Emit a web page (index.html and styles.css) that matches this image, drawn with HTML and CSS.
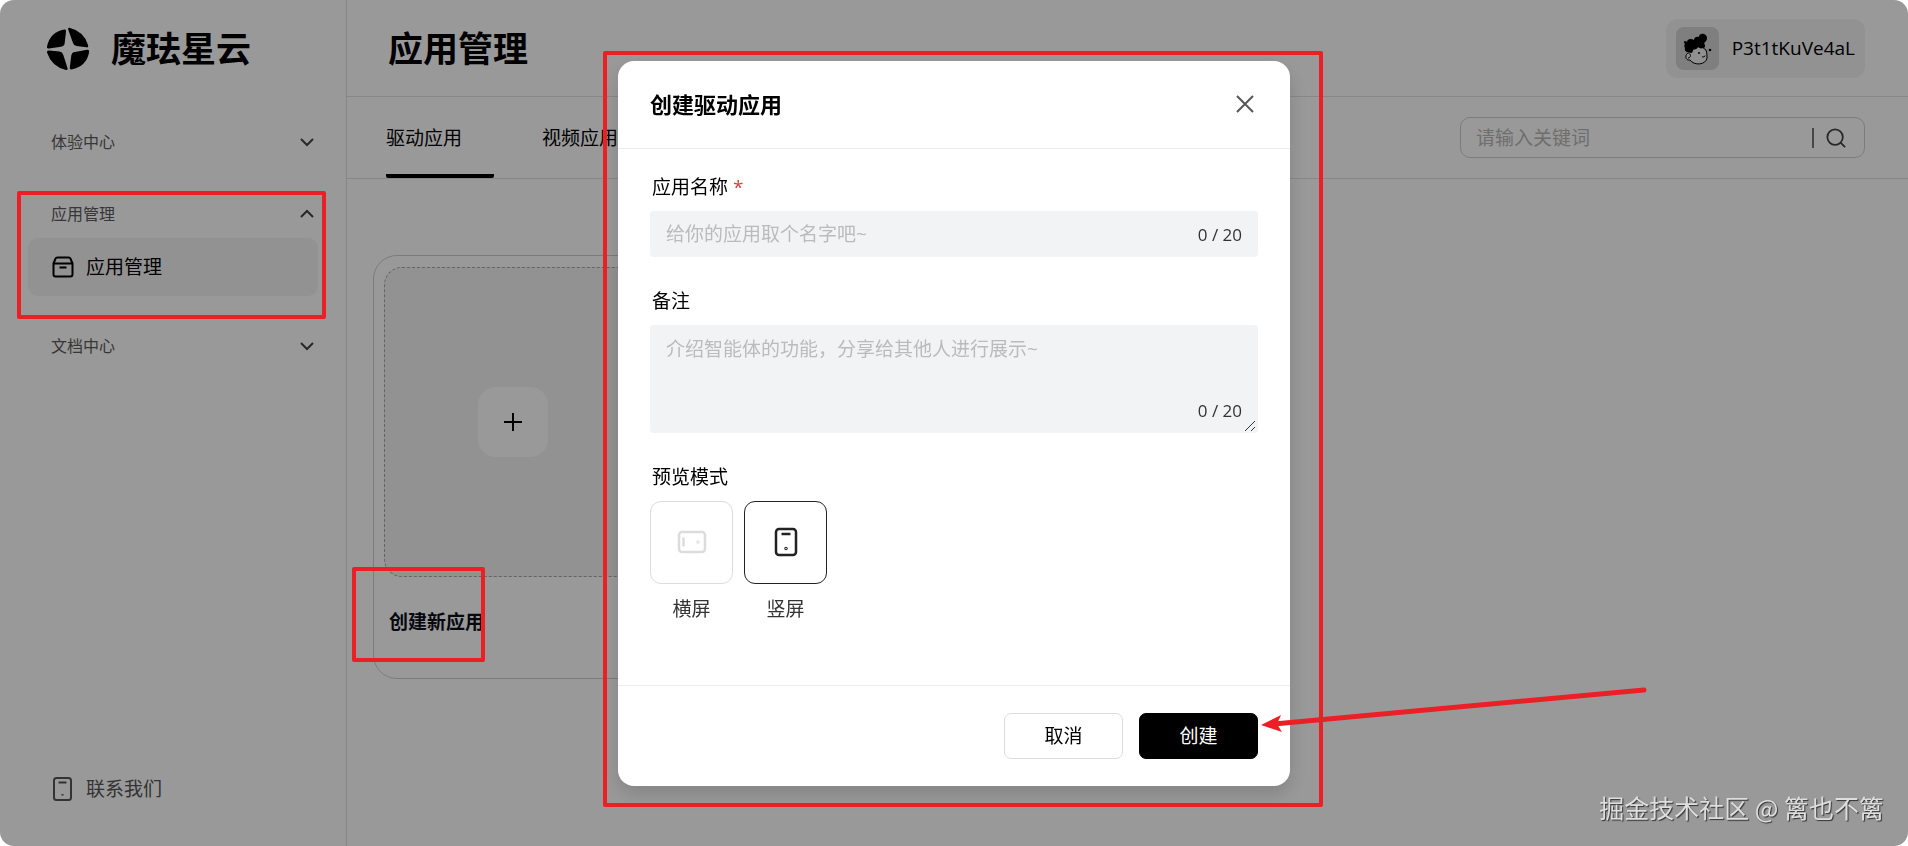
FILE: index.html
```html
<!DOCTYPE html>
<html lang="zh-CN">
  <head>
    <meta charset="UTF-8" />
    <meta name="viewport" content="width=device-width, initial-scale=1.0" />
    <title>应用管理</title>
    <link rel="stylesheet" href="styles.css" />
  </head>
  <body>
    <div class="app">
      <aside class="sidebar">
        <div class="brand">
          <svg class="brand-logo" viewBox="0 0 44 44" aria-hidden="true">
            <path d="M18.500 2.500 Q4 5 1 19.500 Q0.500 22 3 21.500 L15 19.800 Q18.500 19.300 18.700 16 L20 4.500 Q20.200 2.200 18.500 2.500Z" />
            <path d="M23.500 0.800 Q38 4.500 42 18 Q43 20.800 40.500 20.300 L30.500 19 Q27.800 18.600 27 16 L22.200 2.500 Q21.700 0.300 23.500 0.800Z" />
            <path d="M1 25.500 Q0.600 23.300 3 23.500 L13.500 24.600 Q16.500 25 17.300 28 L21.500 41 Q22.300 43.500 20 43 Q5.500 39.500 1 25.500Z" />
            <path d="M25.500 42.500 Q40.500 39.500 43.200 25 Q43.600 22.400 41 22.800 L29 24.900 Q25.700 25.300 25.300 28.500 L23.800 40.500 Q23.500 42.800 25.500 42.500Z" />
          </svg>
          <span class="brand-name">魔珐星云</span>
        </div>

        <nav class="menu">
          <div class="menu-group">
            <button class="menu-head" type="button">
              体验中心
              <svg class="chevron" viewBox="0 0 14 8"><path d="M1 1l6 6 6-6" /></svg>
            </button>
          </div>
          <div class="menu-group">
            <div class="mark mark-menu"></div>
            <button class="menu-head" type="button">
              应用管理
              <svg class="chevron" viewBox="0 0 14 8"><path d="M1 7l6-6 6 6" /></svg>
            </button>
            <a class="menu-item active" href="#">
              <svg class="menu-icon" viewBox="0 0 22 24">
                <path d="M1.500 8.500h19v11a2 2 0 0 1-2 2h-15a2 2 0 0 1-2-2zM1.500 8.500l2-4.800a2 2 0 0 1 1.800-1.200h11.400a2 2 0 0 1 1.800 1.200l2 4.800M7.500 12.500h7" />
              </svg>
              应用管理
            </a>
          </div>
          <div class="menu-group">
            <button class="menu-head" type="button">
              文档中心
              <svg class="chevron" viewBox="0 0 14 8"><path d="M1 1l6 6 6-6" /></svg>
            </button>
          </div>
        </nav>

        <a class="menu-item contact" href="#">
          <svg class="menu-icon" viewBox="0 0 22 24">
            <rect x="2" y="1" width="17" height="22" rx="2.500" />
            <path d="M6.500 5.500h8M10.500 17v1.500" />
          </svg>
          联系我们
        </a>
      </aside>

      <main class="main">
        <header class="topbar">
          <h1 class="page-title">应用管理</h1>
          <button class="user" type="button">
            <svg class="avatar" viewBox="0 0 43 43">
              <rect class="avatar-bg" width="43" height="43" rx="8" />
              <path class="avatar-face" d="M14 26c-5-1-6 8 0 7 4 6 16 5 17-2 0-3 0-5-1-8L22 17l-6 6z" />
              <path d="M12 31c2 0 3-2 2-4M26 29.500c1 1 3 .5 3-1" class="avatar-line" />
              <path d="M9 17c-3-3 1-4 2-2 0-3 4-4 7-2 0-3 3-4 5-3 0-5 8-4 8 1 0 3-2 4-3 5 2 3 1 5-1 5-2 1-4 0-5-1-1 3-4 2-5 3 0 2-1 3-2 3l-1-1c-3 1-6-1-5-4-1-1-1-3 0-4z" />
              <circle cx="23" cy="26" r="1" />
              <circle cx="34" cy="23" r="1.300" />
            </svg>
            <span>P3t1tKuVe4aL</span>
          </button>
        </header>

        <div class="toolbar">
          <div class="tabs" role="tablist">
            <button class="tab active" type="button" role="tab" aria-selected="true">驱动应用</button>
            <button class="tab" type="button" role="tab" aria-selected="false">视频应用</button>
          </div>
          <form class="search">
            <input class="search-input" type="text" placeholder="请输入关键词" aria-label="请输入关键词" />
            <button class="search-btn" type="button" aria-label="搜索">
              <svg viewBox="0 0 22 22"><circle cx="10" cy="10" r="8.500" /><path d="M16 16l5 5" /></svg>
            </button>
          </form>
        </div>

        <section class="cards">
          <article class="card">
            <div class="card-cover">
              <button class="add-btn" type="button" aria-label="创建新应用">
                <svg viewBox="0 0 18 18"><path d="M9 0v18M0 9h18" /></svg>
              </button>
            </div>
            <div class="card-foot">
              <div class="mark mark-card"></div>
              <h2 class="card-title">创建新应用</h2>
            </div>
          </article>
        </section>
      </main>
    </div>

    <div class="overlay">
      <div class="modal" role="dialog" aria-modal="true" aria-labelledby="modal-title">
        <div class="mark mark-modal"></div>
        <div class="modal-header">
          <h2 class="modal-title" id="modal-title">创建驱动应用</h2>
          <button class="close" type="button" aria-label="关闭">
            <svg viewBox="0 0 18 18"><path d="M1 1l16 16M17 1L1 17" /></svg>
          </button>
        </div>

        <form class="modal-form">
          <div class="modal-body">
            <div class="field">
              <label class="field-label" for="app-name">应用名称 <span class="required">*</span></label>
              <div class="control">
                <input class="text-input" id="app-name" type="text" maxlength="20" placeholder="给你的应用取个名字吧~" />
                <span class="count">0 / 20</span>
              </div>
            </div>

            <div class="field">
              <label class="field-label" for="app-desc">备注</label>
              <div class="control">
                <textarea class="text-input text-area" id="app-desc" maxlength="20" placeholder="介绍智能体的功能，分享给其他人进行展示~"></textarea>
                <span class="count">0 / 20</span>
                <svg class="grip" viewBox="0 0 12 12"><path d="M1 11L11 1M7 11l4-4" /></svg>
              </div>
            </div>

            <fieldset class="field modes">
              <legend class="field-label">预览模式</legend>
              <div class="mode-list">
                <label class="mode">
                  <input type="radio" name="mode" value="landscape" />
                  <span class="mode-box">
                    <svg viewBox="0 0 30 30">
                      <rect x="2" y="5" width="26" height="20" rx="3" />
                      <path d="M6.500 10.500v9" />
                      <circle cx="21" cy="15" r="0.500" />
                    </svg>
                  </span>
                  横屏
                </label>
                <label class="mode">
                  <input type="radio" name="mode" value="portrait" checked />
                  <span class="mode-box">
                    <svg viewBox="0 0 30 30">
                      <rect x="5" y="2" width="20" height="26" rx="3" />
                      <path d="M10.500 7h9" />
                      <circle cx="15" cy="21.500" r="0.500" />
                    </svg>
                  </span>
                  竖屏
                </label>
              </div>
            </fieldset>
          </div>

          <div class="modal-footer">
            <button class="btn" type="button">取消</button>
            <button class="btn btn-primary" type="button">
              创建
              <svg class="arrow" viewBox="0 0 386 46">
                <path class="arrow-line" d="M384 4L14 38" />
                <path class="arrow-head" d="M1 39L21 29 17 38 22 46Z" />
              </svg>
            </button>
          </div>
        </form>
      </div>
    </div>

    <div class="watermark">掘金技术社区 @ 篱也不篱</div>
  </body>
</html>
```
FILE: styles.css
```css
* {
  box-sizing: border-box;
}

body {
  margin: 0;
  font-family: "Open Sans", "Noto Sans CJK SC", sans-serif;
  font-size: 19px;
  line-height: 28px;
  color: #000;
  background-color: #fff;
}

h1,
h2 {
  margin: 0;
  font-weight: bold;
}

button,
input,
textarea {
  font: inherit;
  color: inherit;
}

button {
  padding: 0;
  border: none;
  background: none;
  cursor: pointer;
}

a {
  color: inherit;
  text-decoration: none;
}

svg {
  display: block;
}

.app {
  display: flex;
  min-height: 100vh;
}

/* sidebar */
.sidebar {
  display: flex;
  flex-direction: column;
  width: 347px;
  padding: 0 28px 28px;
  border-right: 1px solid #e2e2e2;
}

.brand {
  display: flex;
  align-items: center;
  gap: 21px;
  height: 98px;
  padding-left: 18px;
}

.brand-logo {
  width: 44px;
  height: 44px;
}

.brand-name,
.page-title {
  font-size: 35px;
  line-height: 48px;
  font-weight: bold;
}

.menu {
  display: flex;
  flex: 1;
  flex-direction: column;
  gap: 28px;
  padding-top: 22px;
}

.menu-group {
  position: relative;
}

.menu-head {
  display: flex;
  align-items: center;
  justify-content: space-between;
  width: 100%;
  height: 44px;
  padding: 0 4px 0 23px;
  font-size: 16px;
  color: #5c5c5c;
}

.chevron {
  width: 14px;
  height: 8px;
  overflow: visible;
  fill: none;
  stroke: #444;
  stroke-width: 2;
}

.menu-item {
  display: flex;
  align-items: center;
  gap: 12px;
  height: 58px;
  margin-top: 2px;
  padding: 0 24px;
  border-radius: 10px;
}

.menu-item.active {
  background-color: #f3f3f3;
}

.menu-icon {
  width: 22px;
  height: 24px;
  fill: none;
  stroke: currentColor;
  stroke-width: 2;
}

.contact {
  color: #555;
}

/* main area */
.main {
  flex: 1;
}

.topbar,
.toolbar {
  display: flex;
  align-items: center;
  justify-content: space-between;
  padding: 0 43px 0 39px;
  border-bottom: 1px solid #e2e2e2;
}

.topbar {
  height: 97px;
}

.page-title {
  padding: 2px 2px 0;
}

.user {
  display: flex;
  align-items: center;
  gap: 13px;
  height: 59px;
  padding: 0 10px;
  border-radius: 12px;
  background-color: #f3f3f3;
}

.avatar {
  width: 43px;
  height: 43px;
}

.avatar-bg {
  fill: #d4d4d4;
}

.avatar-face {
  fill: #f0f0f0;
  stroke: #000;
}

.avatar-line {
  fill: none;
  stroke: #000;
}

.toolbar {
  height: 82px;
}

.tabs {
  display: flex;
  gap: 48px;
  align-self: stretch;
}

.tab {
  width: 108px;
  padding-top: 4px;
  border-bottom: 4px solid transparent;
  border-radius: 2px;
  text-align: left;
}

.tab.active {
  border-bottom-color: #000;
}

.search {
  display: flex;
  align-items: center;
  width: 405px;
  height: 41px;
  padding: 0 17px 0 15px;
  border: 1px solid #cfcfcf;
  border-radius: 10px;
}

.search-input {
  flex: 1;
  min-width: 0;
  padding: 0;
  border: none;
  outline: none;
  background: none;
}

.search-input::placeholder {
  color: #b8b8b8;
}

.search-btn {
  padding-left: 11px;
  border-left: 2px solid #777;
}

.search-btn svg {
  width: 22px;
  height: 20px;
  fill: none;
  stroke: #444;
  stroke-width: 2;
}

/* cards */
.cards {
  display: flex;
  flex-wrap: wrap;
  gap: 24px;
  padding: 76px 26px 0;
}

.card {
  width: 280px;
  padding: 11px 10px;
  border: 1px solid #cfcfcf;
  border-radius: 24px;
}

.card-cover {
  display: flex;
  align-items: center;
  justify-content: center;
  height: 310px;
  border: 1px dashed #a8a8a8;
  border-radius: 18px;
  background-color: #f3f3f3;
}

.add-btn {
  display: flex;
  align-items: center;
  justify-content: center;
  width: 70px;
  height: 70px;
  border-radius: 18px;
  background-color: #fff;
}

.add-btn svg {
  width: 18px;
  height: 18px;
  fill: none;
  stroke: #000;
  stroke-width: 2;
}

.card-foot {
  position: relative;
  display: flex;
  align-items: center;
  height: 90px;
  padding-left: 5px;
}

.card-title {
  font-size: 19px;
  color: #0b0f19;
}

/* create dialog */
.overlay {
  position: fixed;
  inset: 0;
  z-index: 10;
  display: flex;
  align-items: center;
  justify-content: center;
  border-radius: 14px;
  background-color: rgba(0, 0, 0, 0.4);
}

.modal {
  position: relative;
  width: 672px;
  border-radius: 16px;
  background-color: #fff;
  box-shadow: 0 8px 20px rgba(0, 0, 0, 0.15);
}

.modal-header {
  display: flex;
  align-items: center;
  justify-content: space-between;
  height: 88px;
  padding: 0 36px 0 32px;
  border-bottom: 1px solid #ececec;
}

.modal-title {
  font-size: 22px;
}

.close svg {
  width: 18px;
  height: 18px;
  fill: none;
  stroke: #555;
  stroke-width: 2;
}

.modal-body {
  display: flex;
  flex-direction: column;
  gap: 30px;
  padding: 24px 32px 62px;
}

.field {
  display: flex;
  flex-direction: column;
  gap: 10px;
}

.field-label {
  padding: 0 2px;
}

.required {
  color: #e03c3c;
}

.control {
  position: relative;
  display: flex;
}

.text-input {
  width: 100%;
  height: 46px;
  padding: 0 90px 0 16px;
  border: none;
  border-radius: 4px;
  outline: none;
  background-color: #f2f3f5;
}

.text-input::placeholder {
  color: #bbb;
}

.text-area {
  height: 108px;
  padding: 10px 16px;
  resize: vertical;
}

.text-area::-webkit-resizer {
  background: transparent;
}

.grip {
  position: absolute;
  right: 2px;
  bottom: 1px;
  width: 12px;
  height: 12px;
  fill: none;
  stroke: #333;
  pointer-events: none;
}

.count {
  position: absolute;
  right: 16px;
  bottom: 8px;
  font-size: 17px;
  color: #333;
}

.modes {
  display: block;
  margin: 0;
  padding: 0;
  border: none;
}

.mode-list {
  display: flex;
  gap: 11px;
  padding-top: 10px;
}

.mode {
  display: flex;
  flex-direction: column;
  align-items: center;
  gap: 11px;
  color: #333;
  cursor: pointer;
}

.mode input {
  position: absolute;
  opacity: 0;
}

.mode-box {
  display: flex;
  align-items: center;
  justify-content: center;
  width: 83px;
  height: 83px;
  border: 1px solid #dcdcdc;
  border-radius: 11px;
  color: #dcdcdc;
}

.mode input:checked + .mode-box {
  border-color: #222;
  color: #222;
}

.mode-box svg {
  width: 30px;
  height: 30px;
  fill: none;
  stroke: currentColor;
  stroke-width: 2.5;
}

.modal-footer {
  display: flex;
  justify-content: flex-end;
  gap: 16px;
  padding: 27px 32px;
  border-top: 1px solid #ececec;
}

.btn {
  position: relative;
  width: 119px;
  height: 46px;
  border: 1px solid #dcdcdc;
  border-radius: 7px;
}

.btn-primary {
  border-color: #000;
  background-color: #000;
  color: #fff;
}

/* red guide marks, drawn over everything */
.mark {
  position: absolute;
  z-index: 20;
  border: 4px solid #eb2027;
  border-radius: 2px;
  pointer-events: none;
}

.mark-menu {
  inset: -1px -8px -23px -11px;
}

.mark-card {
  top: -10px;
  left: -32px;
  width: 133px;
  height: 95px;
}

.mark-modal {
  inset: -10px -33px -21px -15px;
}

.arrow {
  position: absolute;
  top: -28px;
  left: 120px;
  width: 386px;
  height: 46px;
  overflow: visible;
  pointer-events: none;
}

.arrow-line {
  fill: none;
  stroke: #eb2027;
  stroke-width: 5;
  stroke-linecap: round;
}

.arrow-head {
  fill: #eb2027;
}

.watermark {
  position: fixed;
  right: 24px;
  bottom: 21px;
  z-index: 30;
  font-family: "Noto Sans CJK SC", sans-serif;
  font-size: 25px;
  line-height: 36px;
  color: #dedede;
  text-shadow: 1px 1px 1px #333;
}
```
